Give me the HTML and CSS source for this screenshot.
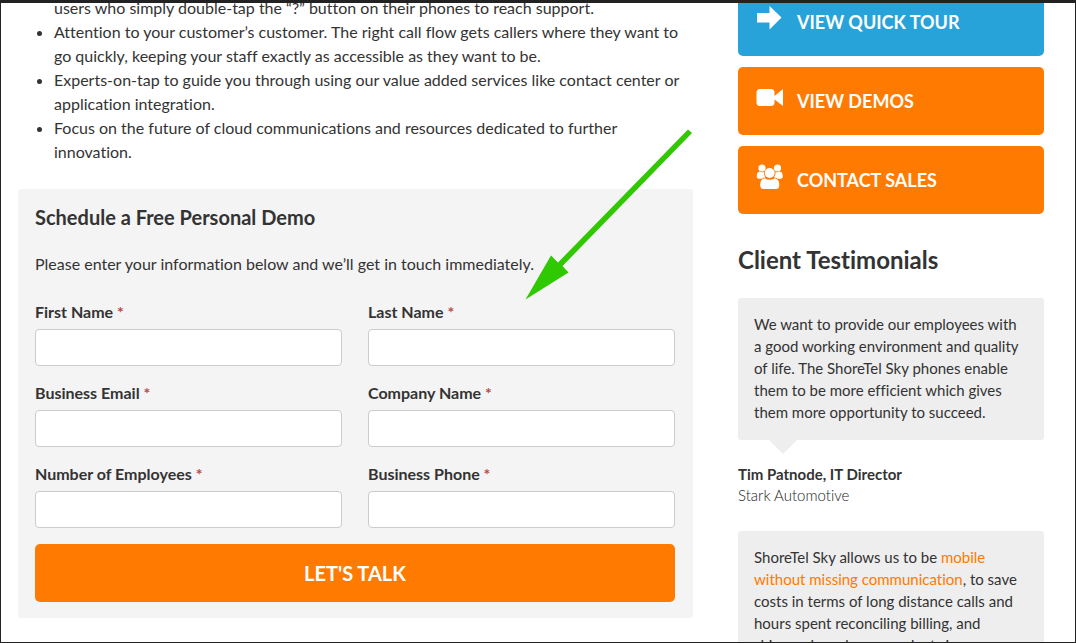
FILE: index.html
```
<!doctype html>
<html lang="en">
<head>
<meta charset="UTF-8">
<meta name="viewport" content="width=device-width, initial-scale=1">
<title>Schedule a Free Personal Demo</title>
<link rel="stylesheet" href="styles.css">
</head>
<body>
	<div class="page">
		<div class="content">
			<main class="main">
				<ul class="benefits">
					<li class="cont">users who simply double-tap the “?” button on their phones to reach support.</li>
					<li>Attention to your customer’s customer. The right call flow gets callers where they want to<br>go quickly, keeping your staff exactly as accessible as they want to be.</li>
					<li>Experts-on-tap to guide you through using our value added services like contact center or<br>application integration.</li>
					<li>Focus on the future of cloud communications and resources dedicated to further<br>innovation.</li>
				</ul>
				<form class="demo-form" action="#" method="post">
					<h3>Schedule a Free Personal Demo</h3>
					<p>Please enter your information below and we’ll get in touch immediately.</p>
					<div class="fields">
						<div class="field">
							<label for="first-name">First Name <span class="req">*</span></label>
							<input type="text" id="first-name" name="first-name">
						</div>
						<div class="field">
							<label for="last-name">Last Name <span class="req">*</span></label>
							<input type="text" id="last-name" name="last-name">
						</div>
						<div class="field">
							<label for="email">Business Email <span class="req">*</span></label>
							<input type="email" id="email" name="email">
						</div>
						<div class="field">
							<label for="company">Company Name <span class="req">*</span></label>
							<input type="text" id="company" name="company">
						</div>
						<div class="field">
							<label for="employees">Number of Employees <span class="req">*</span></label>
							<input type="text" id="employees" name="employees">
						</div>
						<div class="field">
							<label for="phone">Business Phone <span class="req">*</span></label>
							<input type="tel" id="phone" name="phone">
						</div>
					</div>
					<button class="submit" type="submit">LET'S TALK</button>
					<svg class="pointer" width="168" height="172" viewBox="0 0 168 172" aria-hidden="true">
						<path d="M163 0.5L167 4L37.500 137L43.500 143.500L0.500 170.500L26 126.500L33 133.500Z"/>
					</svg>
				</form>
			</main>
			<aside class="sidebar">
				<a class="cta blue" href="#">
					<svg width="28" height="28" viewBox="0 0 28 28" aria-hidden="true"><path d="M1 9H13.500V2L25.500 13.500L13.500 25.500V18.500H1Z"/></svg>
					VIEW QUICK TOUR
				</a>
				<a class="cta" href="#">
					<svg width="28" height="28" viewBox="0 0 28 28" aria-hidden="true"><path d="M4 6H15Q18.500 6 18.500 9.500V13L27 6V23L18.500 16.500V19.500Q18.500 23 15 23H4Q0.500 23 0.500 19.500V9.500Q0.500 6 4 6Z"/></svg>
					VIEW DEMOS
				</a>
				<a class="cta" href="#">
					<svg width="28" height="28" viewBox="0 0 28 28" aria-hidden="true"><circle cx="6" cy="6" r="3.600"/><circle cx="21.500" cy="6" r="3.600"/><circle cx="13.700" cy="11" r="5"/><path d="M3.500 9.500Q6 11 8 9.800Q7.500 13 9.500 15.500Q7 15.500 6 16.800H2.500Q0.700 16.500 0.700 14.500Q0.800 10 3.500 9.500ZM24 9.500Q21.500 11 19.500 9.800Q20 13 18 15.500Q20.500 15.500 21.500 16.800H25Q26.800 16.500 26.800 14.500Q26.700 10 24 9.500ZM8.500 16.200Q13.700 19.500 19 16.200Q23.500 17.500 23.300 23.500Q23 27 20 27H7.500Q4.500 27 4.200 23.500Q4 17.500 8.500 16.200Z"/></svg>
					CONTACT SALES
				</a>
				<h2>Client Testimonials</h2>
				<div class="testimonial">
					<blockquote>We want to provide our employees with<br>a good working environment and quality<br>of life. The ShoreTel Sky phones enable<br>them to be more efficient which gives<br>them more opportunity to succeed.</blockquote>
					<p class="author"><strong>Tim Patnode, IT Director</strong><br>Stark Automotive</p>
				</div>
				<div class="testimonial">
					<blockquote>ShoreTel Sky allows us to be <a href="#">mobile<br>without missing communication</a>, to save<br>costs in terms of long distance calls and<br>hours spent reconciling billing, and<br>ship our brand new products in</blockquote>
				</div>
			</aside>
		</div>
	</div>
</body>
</html>
```
FILE: styles.css
```
*{margin:0;padding:0;box-sizing:border-box;}
body{font:16px/24px Lato,"Open Sans",sans-serif;font-variant-ligatures:none;color:#333;background:#fff;}
.page{height:100vh;overflow:hidden;border:1px solid #222;border-top-width:3px;}
.content{display:grid;grid-template-columns:675fr 306fr;column-gap:45px;padding:0 31px 0 17px;align-items:start;}

/* main column */
.main{margin-top:-7px;}
.benefits{padding-left:36px;margin-bottom:25px;}
.benefits .cont{list-style:none;}

/* form */
.demo-form{position:relative;background:#f4f4f4;border-radius:3px;padding:14px 18px 16px 17px;}
.demo-form h3{font-size:20px;line-height:28px;font-weight:700;margin-bottom:21px;}
.demo-form p{margin-bottom:24px;}
.fields{display:grid;grid-template-columns:1fr 1fr;gap:15px 26px;margin-bottom:16px;}
.field label{display:block;font-weight:700;margin-bottom:5px;}
.field input{display:block;width:100%;height:37px;border:1px solid #ccc;border-radius:4px;background:#fff;padding:6px 12px;font:inherit;}
.req{color:#b94a48;}
.submit{display:block;width:100%;height:58px;border:0;border-radius:5px;background:#ff7a00;color:#fff;font:700 20px/28px Lato,"Open Sans",sans-serif;cursor:pointer;}
.pointer{position:absolute;right:0;top:-60px;fill:#30c800;}

/* sidebar */
.sidebar{margin-top:-15px;}
.cta{display:flex;align-items:center;gap:13px;height:68px;margin-bottom:11px;padding:0 18px;border-radius:5px;background:#ff7a00;color:#fff;font-size:18px;font-weight:700;text-decoration:none;}
.cta svg{fill:#fff;margin-bottom:8px;}
.cta.blue{background:#27a3d9;}
.sidebar h2{font-size:24px;line-height:32px;font-weight:700;margin:30px 0 22px;}
.testimonial{margin-bottom:24px;}
.testimonial blockquote{position:relative;background:#eee;border-radius:3px;padding:15px 16px 17px;font-size:15px;line-height:22px;margin-bottom:24px;}
.testimonial blockquote:after{content:"";position:absolute;left:31px;top:100%;border:14px solid transparent;border-top-color:#eee;border-bottom:0;}
.testimonial a{color:#ff7a00;text-decoration:none;}
.author{font-size:15px;line-height:21px;font-weight:300;color:#222;margin-bottom:25px;}
.author strong{font-weight:700;color:#333;}
```
